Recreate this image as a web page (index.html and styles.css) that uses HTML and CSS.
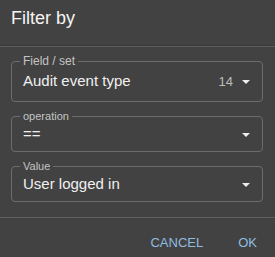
FILE: index.html
```html
<!DOCTYPE html>
<html lang="en">
<head>
    <meta charset="UTF-8">
    <meta name="viewport" content="width=device-width, initial-scale=1.0">
    <title>Filter by</title>
    <link rel="stylesheet" href="styles.css">
</head>
<body>
    <div class="dialog">
        <div class="dialog-header">
            <h1>Filter by</h1>
        </div>

        <div class="dialog-body">
            <fieldset class="select-field select-field-main">
                <legend>Field / set</legend>
                <div class="select-row">
                    <span class="select-value">Audit event type</span>
                    <span class="select-count">14</span>
                    <svg class="select-arrow" width="8" height="4" viewBox="0 0 8 4"><path d="M0 0h8L4 4z" fill="#eeeeee"></path></svg>
                </div>
            </fieldset>

            <fieldset class="select-field">
                <legend>operation</legend>
                <div class="select-row">
                    <span class="select-value">==</span>
                    <svg class="select-arrow" width="8" height="4" viewBox="0 0 8 4"><path d="M0 0h8L4 4z" fill="#eeeeee"></path></svg>
                </div>
            </fieldset>

            <fieldset class="select-field">
                <legend>Value</legend>
                <div class="select-row">
                    <span class="select-value">User logged in</span>
                    <svg class="select-arrow" width="8" height="4" viewBox="0 0 8 4"><path d="M0 0h8L4 4z" fill="#eeeeee"></path></svg>
                </div>
            </fieldset>
        </div>

        <div class="dialog-actions">
            <button type="button" class="btn-text">CANCEL</button>
            <button type="button" class="btn-text">OK</button>
        </div>
    </div>
</body>
</html>
```

FILE: styles.css
```css
body {
    margin: 0;
    padding: 0;
    background-color: #424242;
    font-family: "Liberation Sans", Arial, sans-serif;
    color: #eeeeee;
}

.dialog {
    width: 275px;
    height: 257px;
    background-color: #424242;
}

.dialog-header {
    height: 47px;
    padding: 9px 11px 0;
    box-sizing: border-box;
    border-bottom: 1px solid #5e5e5e;
    box-shadow: 0 -6px 0 -5px #3a3a3a inset;
}

.dialog-header h1 {
    margin: 0;
    font-size: 18px;
    line-height: 18px;
    font-weight: normal;
    color: #f5f5f5;
}

.dialog-body {
    padding: 8px 12px 15px 11px;
}

.select-field {
    margin: 0 0 8px;
    padding: 2px 10px 7px 11px;
    border: 1px solid #6c6c6c;
    border-radius: 4px;
    min-width: 0;
}

.select-field:last-child {
    margin-bottom: 0;
}

.select-field legend {
    margin-left: -3px;
    padding: 0 3px;
    font-size: 11px;
    line-height: 12px;
    color: #c4c4c4;
}

.select-field-main {
    padding-top: 4px;
    padding-bottom: 10px;
}

.select-field-main legend {
    font-size: 12px;
}

.select-row {
    display: flex;
    align-items: center;
    height: 20px;
}

.select-value {
    flex: 1;
    font-size: 15px;
    line-height: 20px;
    color: #f0f0f0;
}

.select-count {
    font-size: 13px;
    color: #bdbdbd;
    margin-right: 9px;
}

.select-arrow {
    margin-right: 2px;
    margin-top: 1px;
}

.dialog-actions {
    display: flex;
    justify-content: flex-end;
    gap: 35px;
    padding: 17px 18px 0 0;
    border-top: 1px solid #5e5e5e;
}

.btn-text {
    background: none;
    border: none;
    padding: 0;
    font-family: "Liberation Sans", Arial, sans-serif;
    font-size: 13px;
    line-height: 16px;
    color: #90bce0;
    cursor: pointer;
}
```
